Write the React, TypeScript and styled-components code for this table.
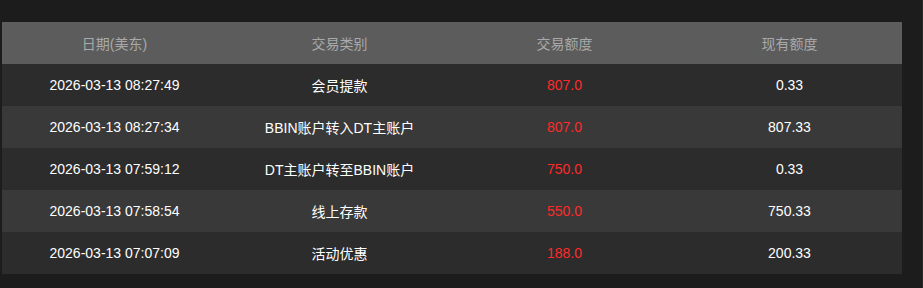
import React from "react";
import styled, { createGlobalStyle } from "styled-components";

const Global = createGlobalStyle`
  html, body {
    margin: 0;
    padding: 0;
    background: #1c1c1c;
  }
  body {
    font-family: "Liberation Sans", Arial, "Noto Sans CJK SC", sans-serif;
  }
`;

const Page = styled.div`
  box-sizing: border-box;
  width: 923px;
  height: 288px;
  padding: 22px 20px 0 2px;
  border-right: 1px solid #2a2a2a;
  background: #1c1c1c;
`;

const Table = styled.table`
  width: 900px;
  border-collapse: collapse;
  table-layout: fixed;
  font-size: 14px;
`;

const HeadCell = styled.th`
  height: 42px;
  padding: 0;
  background: #5c5c5c;
  color: #a9a9a9;
  font-weight: normal;
  text-align: center;
  vertical-align: middle;
`;

const Row = styled.tr<{ $alt: boolean }>`
  background: ${(p) => (p.$alt ? "#393939" : "#2c2c2c")};
`;

const Cell = styled.td<{ $red?: boolean }>`
  height: 42px;
  padding: 0;
  text-align: center;
  vertical-align: middle;
  color: ${(p) => (p.$red ? "#ff2a2a" : "#ffffff")};
`;

const rows = [
  ["2026-03-13 08:27:49", "会员提款", "807.0", "0.33"],
  ["2026-03-13 08:27:34", "BBIN账户转入DT主账户", "807.0", "807.33"],
  ["2026-03-13 07:59:12", "DT主账户转至BBIN账户", "750.0", "0.33"],
  ["2026-03-13 07:58:54", "线上存款", "550.0", "750.33"],
  ["2026-03-13 07:07:09", "活动优惠", "188.0", "200.33"],
];

export default function App() {
  return (
    <>
      <Global />
      <Page>
        <Table>
          <thead>
            <tr>
              <HeadCell>日期(美东)</HeadCell>
              <HeadCell>交易类别</HeadCell>
              <HeadCell>交易额度</HeadCell>
              <HeadCell>现有额度</HeadCell>
            </tr>
          </thead>
          <tbody>
            {rows.map((r, i) => (
              <Row key={i} $alt={i % 2 === 1}>
                <Cell>{r[0]}</Cell>
                <Cell>{r[1]}</Cell>
                <Cell $red>{r[2]}</Cell>
                <Cell>{r[3]}</Cell>
              </Row>
            ))}
          </tbody>
        </Table>
      </Page>
    </>
  );
}
